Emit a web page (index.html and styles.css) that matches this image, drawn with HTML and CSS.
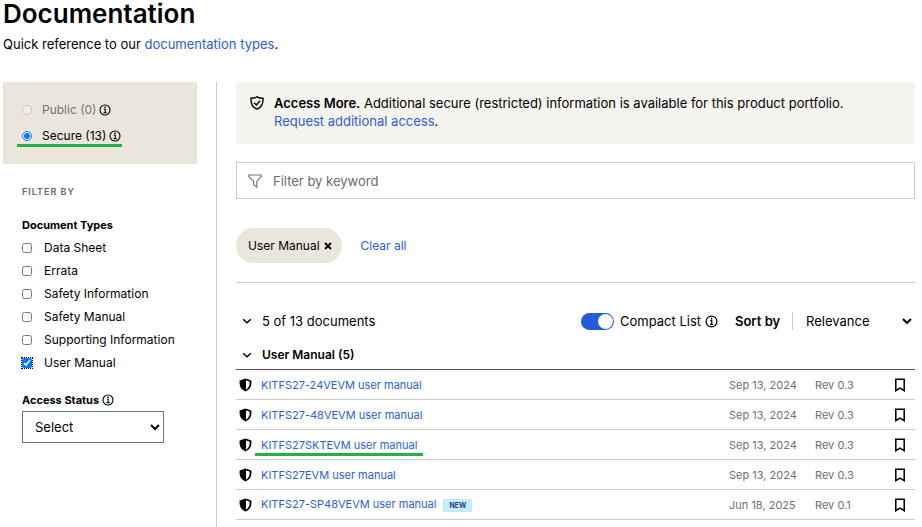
FILE: index.html
```html
<!DOCTYPE html>
<html lang="en">
<head>
    <meta charset="UTF-8" />
    <meta name="viewport" content="width=device-width, initial-scale=1">
    <title>Documentation</title>
    <link rel="stylesheet" href="styles.css">
</head>
<body>
    <!-- shared icons -->
    <svg class="sprite" aria-hidden="true">
        <symbol id="info" viewBox="0 0 12 12">
            <circle cx="6" cy="6" r="5" fill="none" stroke="currentColor" stroke-width="1.1"/>
            <path d="M4.9 5.2H6.2V8.6M4.6 8.6H7.6" fill="none" stroke="currentColor" stroke-width="1.1"/>
            <circle cx="6" cy="3.4" r=".8" fill="currentColor"/>
        </symbol>
        <symbol id="down" viewBox="0 0 10 6">
            <path d="M1.2 1.2L5 4.8L8.8 1.2" fill="none" stroke="currentColor" stroke-width="1.4"/>
        </symbol>
        <symbol id="shield" viewBox="0 0 13 14">
            <path d="M6.5 .4L12.4 2.4V5.6C12.4 9.2 10.3 12 6.5 13.6C2.7 12 .6 9.2 .6 5.6V2.4Z" fill="currentColor"/>
            <path d="M7 2.4L10.6 3.6V5.8C10.6 8.3 9.3 10.3 7 11.5Z" fill="#fff"/>
        </symbol>
        <symbol id="bookmark" viewBox="0 0 12 14">
            <path d="M1.8 1.2H10.2V12.6L6 10.2L1.8 12.6Z" fill="none" stroke="currentColor" stroke-width="1.5"/>
        </symbol>
    </svg>

    <h1>Documentation</h1>
    <p class="intro">Quick reference to our <a href="#">documentation types</a>.</p>

    <div class="layout">
        <aside class="sidebar">
            <div class="access">
                <div class="option disabled">
                    <input type="radio" name="access" id="public" disabled>
                    <label for="public">Public (0)</label>
                    <svg class="info"><use href="#info"/></svg>
                </div>
                <div class="option marked">
                    <input type="radio" name="access" id="secure" checked>
                    <label for="secure">Secure (13)</label>
                    <svg class="info"><use href="#info"/></svg>
                </div>
            </div>

            <form class="filters">
                <h2>FILTER BY</h2>
                <h3>Document Types</h3>
                <ul>
                    <li><input type="checkbox" id="t1"><label for="t1">Data Sheet</label></li>
                    <li><input type="checkbox" id="t2"><label for="t2">Errata</label></li>
                    <li><input type="checkbox" id="t3"><label for="t3">Safety Information</label></li>
                    <li><input type="checkbox" id="t4"><label for="t4">Safety Manual</label></li>
                    <li><input type="checkbox" id="t5"><label for="t5">Supporting Information</label></li>
                    <li><input type="checkbox" id="t6" class="current" checked><label for="t6">User Manual</label></li>
                </ul>
                <div class="status-title">
                    <label for="status">Access Status</label>
                    <svg class="info"><use href="#info"/></svg>
                </div>
                <select id="status" class="status"><option>Select</option></select>
            </form>
        </aside>

        <main class="content">
            <div class="banner">
                <svg class="banner-icon" viewBox="0 0 14 14">
                    <path d="M7 .8C5.3 1.9 3.2 2.3 1 2.3C.7 7.5 2.4 11.3 7 13.2C11.6 11.3 13.3 7.5 13 2.3C10.8 2.3 8.7 1.9 7 .8Z" fill="none" stroke="#000" stroke-width="1.4"/>
                    <path d="M4 6.8L6.2 9L10.2 4.8" fill="none" stroke="#000" stroke-width="1.4"/>
                </svg>
                <p><strong>Access More.</strong> Additional secure (restricted) information is available for this product portfolio.<br>
                <a href="#">Request additional access</a>.</p>
            </div>

            <div class="search">
                <svg viewBox="0 0 14 14">
                    <path d="M.8 1H13.2V2.5L8.8 7.4V13.2L5.6 10.8V7.4L.8 2.5Z" fill="none" stroke="#777" stroke-width="1.2"/>
                </svg>
                <input type="text" placeholder="Filter by keyword" aria-label="Filter by keyword">
            </div>

            <div class="chips">
                <button type="button" class="chip">User Manual
                    <svg viewBox="0 0 8 8"><path d="M1 1L7 7M7 1L1 7" stroke="#000" stroke-width="1.8"/></svg>
                </button>
                <a href="#">Clear all</a>
            </div>

            <div class="toolbar">
                <button type="button" class="toggle"><svg class="down"><use href="#down"/></svg>5 of 13 documents</button>
                <div class="compact">
                    <input type="checkbox" class="switch" id="compact" checked>
                    <label for="compact">Compact List</label>
                    <svg class="info"><use href="#info"/></svg>
                </div>
                <div class="sort">
                    <label for="sort">Sort by</label>
                    <select id="sort"><option>Relevance</option></select>
                </div>
            </div>

            <button type="button" class="toggle group"><svg class="down"><use href="#down"/></svg>User Manual (5)</button>

            <table class="docs">
                <tr>
                    <td class="lock"><svg><use href="#shield"/></svg></td>
                    <td><a href="#">KITFS27-24VEVM user manual</a></td>
                    <td class="date">Sep 13, 2024</td>
                    <td class="rev">Rev 0.3</td>
                    <td class="save"><button type="button" aria-label="Save"><svg><use href="#bookmark"/></svg></button></td>
                </tr>
                <tr>
                    <td class="lock"><svg><use href="#shield"/></svg></td>
                    <td><a href="#">KITFS27-48VEVM user manual</a></td>
                    <td class="date">Sep 13, 2024</td>
                    <td class="rev">Rev 0.3</td>
                    <td class="save"><button type="button" aria-label="Save"><svg><use href="#bookmark"/></svg></button></td>
                </tr>
                <tr>
                    <td class="lock"><svg><use href="#shield"/></svg></td>
                    <td><a href="#" class="marked">KITFS27SKTEVM user manual</a></td>
                    <td class="date">Sep 13, 2024</td>
                    <td class="rev">Rev 0.3</td>
                    <td class="save"><button type="button" aria-label="Save"><svg><use href="#bookmark"/></svg></button></td>
                </tr>
                <tr>
                    <td class="lock"><svg><use href="#shield"/></svg></td>
                    <td><a href="#">KITFS27EVM user manual</a></td>
                    <td class="date">Sep 13, 2024</td>
                    <td class="rev">Rev 0.3</td>
                    <td class="save"><button type="button" aria-label="Save"><svg><use href="#bookmark"/></svg></button></td>
                </tr>
                <tr>
                    <td class="lock"><svg><use href="#shield"/></svg></td>
                    <td><a href="#">KITFS27-SP48VEVM user manual</a><span class="new">NEW</span></td>
                    <td class="date">Jun 18, 2025</td>
                    <td class="rev">Rev 0.1</td>
                    <td class="save"><button type="button" aria-label="Save"><svg><use href="#bookmark"/></svg></button></td>
                </tr>
            </table>
        </main>
    </div>
</body>
</html>
```

FILE: styles.css
```css
*{ margin:0; padding:0; box-sizing: border-box;}
body{
    padding: 0 7px 0 3px;
    background: #fff;
    color: #000;
    font-family: "Inter", "Open Sans", sans-serif;
    font-size: 13px;
    line-height: 18px;
}
a{ color: #2a5fd8; text-decoration: none;}
ul{ list-style-type: none;}
input, select, button{ font: inherit; color: inherit;}
button{ background: none; border: none; cursor: pointer;}
svg{ display: block; flex: none;}
.sprite{
    position: absolute;
    width: 0;
    height: 0;
}
h1{
    font-size: 26px;
    line-height: 28px;
    font-weight: 600;
}
.intro{
    padding: 7px 0 29px;
}
.info{
    width: 12px;
    height: 12px;
}
.layout{
    display: flex;
}

/* sidebar */
.sidebar{
    flex: none;
    width: 214px;
    min-height: 445px;
    padding-right: 19px;
    border-right: 1px solid #cfcdbf;
    font-size: 12px;
}
.access{
    display: flex;
    flex-direction: column;
    gap: 8px;
    height: 82px;
    padding: 19px;
    background: #eae6dc;
}
.option{
    display: flex;
    align-items: center;
    gap: 3px;
}
.option input{
    width: 10px;
    height: 10px;
    margin-right: 7px;
}
.option.disabled label{
    color: #77746e;
}
.marked{
    position: relative;
}
.marked::after{
    content: "";
    position: absolute;
    left: -6px;
    right: -6px;
    bottom: -4px;
    height: 3px;
    background: #22b14c;
}
.option.marked{
    align-self: flex-start;
}
.option.marked::after{
    left: -5px;
    right: -1px;
    bottom: -2px;
}
.filters{
    padding: 19px 0 0 19px;
}
.filters h2{
    font-size: 9px;
    font-weight: 600;
    letter-spacing: 1px;
    color: #666;
}
.filters h3{
    margin-top: 14px;
    font-size: 11px;
    line-height: 21px;
    font-weight: 700;
}
.filters li{
    display: flex;
    align-items: center;
    height: 23px;
    gap: 12px;
}
.filters li input{
    width: 10px;
    height: 10px;
}
.filters li .current{
    outline: 1px dotted #000;
}
.status-title{
    display: flex;
    align-items: center;
    gap: 3px;
    margin-top: 17px;
    font-size: 11px;
    font-weight: 700;
}
.status{
    display: block;
    width: 142px;
    height: 32px;
    margin-top: 2px;
    padding-left: 8px;
    border: 1px solid #5f7a90;
    border-radius: 0;
    background: #fff;
    font-size: 13px;
}

/* main column */
.content{
    flex: 1;
    min-width: 0;
    padding-left: 19px;
}
.banner{
    display: flex;
    gap: 10px;
    padding: 12px 14px 14px;
    background: #f6f4f0;
}
.banner-icon{
    width: 14px;
    height: 14px;
    margin-top: 2px;
}
.banner strong{
    font-weight: 600;
}
.search{
    display: flex;
    align-items: center;
    gap: 11px;
    height: 37px;
    margin-top: 18px;
    padding: 0 11px;
    border: 1px solid #cfcdc3;
}
.search svg{
    width: 14px;
    height: 14px;
}
.search input{
    flex: 1;
    border: none;
    outline: none;
}
.search input::placeholder{
    color: #6b6b6b;
}
.chips{
    display: flex;
    align-items: center;
    gap: 19px;
    padding: 29px 0 19px;
    border-bottom: 1px solid #cfcdc3;
    font-size: 12px;
}
.chip{
    display: flex;
    align-items: center;
    gap: 4px;
    height: 35px;
    padding: 0 10px 0 12px;
    border-radius: 18px;
    background: #eae6dc;
}
.chip svg{
    width: 8px;
    height: 8px;
}
.toolbar{
    display: flex;
    align-items: center;
    height: 34px;
    margin-top: 21px;
}
.toggle{
    display: flex;
    align-items: center;
    gap: 10px;
    padding-left: 6px;
}
.down{
    width: 10px;
    height: 6px;
}
.group{
    height: 31px;
    padding-top: 3px;
    font-size: 12px;
    font-weight: 600;
}
.compact{
    display: flex;
    align-items: center;
    gap: 4px;
    margin-left: auto;
}
.compact .info{
    width: 13px;
    height: 13px;
}
.switch{
    appearance: none;
    display: flex;
    width: 33px;
    height: 17px;
    margin-right: 2px;
    padding: 1px;
    border-radius: 9px;
    background: #aaa;
}
.switch::before{
    content: "";
    width: 15px;
    height: 15px;
    border-radius: 50%;
    background: #fff;
}
.switch:checked{
    justify-content: flex-end;
    background: #245bd8;
}
.sort{
    display: flex;
    align-items: center;
    width: 180px;
    margin-left: 17px;
}
.sort label{
    width: 58px;
    flex: none;
    border-right: 1px solid #cfcdc3;
    font-weight: 600;
}
.sort select{
    flex: 1;
    padding-left: 9px;
    border: none;
    background: none;
}

/* document list */
.docs{
    width: 100%;
    border-collapse: collapse;
    border-top: 1px solid #555;
    font-size: 11px;
}
.docs tr{
    height: 30px;
    border-bottom: 1px solid #cfcdc3;
}
.docs .lock{
    width: 25px;
    padding-left: 3px;
}
.docs .lock svg{
    width: 13px;
    height: 14px;
}
.docs .date, .docs .rev{
    width: 86px;
    color: #707070;
}
.docs .rev{
    width: 79px;
}
.docs .save{
    width: 21px;
}
.docs .save button{
    display: block;
}
.docs .save svg{
    width: 12px;
    height: 14px;
}
.new{
    margin-left: 7px;
    padding: 2px 6px;
    background: #c3ecff;
    color: #1b3d7a;
    font-size: 7px;
    font-weight: 700;
}
```
